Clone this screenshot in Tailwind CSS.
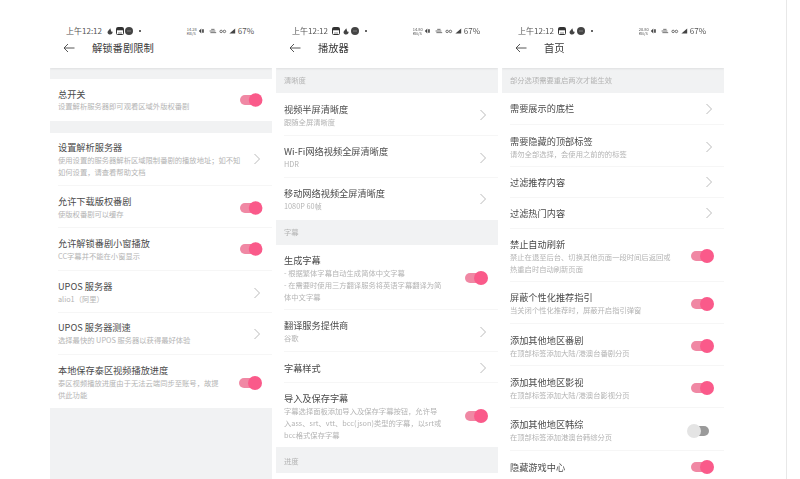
<!DOCTYPE html>
<html lang="zh">
<head>
<meta charset="utf-8">
<script src="https://cdn.jsdelivr.net/npm/@tailwindcss/browser@4"></script>
<title>设置</title>
</head>
<body class="bg-white overflow-hidden font-['Noto_Sans_CJK_SC','Noto_Sans',sans-serif]">
<svg class="hidden">
<symbol id="chev" viewBox="0 0 8 12"><path d="M1.5 1 L6.5 6 L1.5 11" fill="none" stroke="#a8a8a8" stroke-width="0.8"/></symbol>
<symbol id="back" viewBox="0 0 12 10"><path d="M11.5 5H1M5 1L1 5L5 9" fill="none" stroke="#444" stroke-width="0.9"/></symbol>
<symbol id="tog" viewBox="0 0 24 16"><rect x="0" y="3" width="20" height="10" rx="5" fill="#f088a4"/><circle cx="16" cy="8" r="7" fill="#fa5a8a"/></symbol>
<symbol id="togoff" viewBox="0 0 24 16"><rect x="5" y="3" width="18" height="10" rx="5" fill="#9a9a9a"/><circle cx="8" cy="8" r="7" fill="#e4e4e4"/></symbol>
<symbol id="img" viewBox="0 0 8 8"><rect x=".5" y=".5" width="7" height="7" rx="1" fill="none" stroke="#333"/><path d="M1 3H7V1H1ZM2 6H6" stroke="#333" fill="#333" stroke-width=".6"/></symbol>
<symbol id="fl" viewBox="0 0 8 8"><path d="M4 .5C5 2 2 3 1.5 5.200C1.500 7 3 7.500 4 7.500C6 7.500 7 6 6.500 4.500C5.500 5 5 4.500 5 3.500Z" fill="#444"/></symbol>
<symbol id="circ" viewBox="0 0 8 8"><circle cx="4" cy="4" r="4" fill="#444"/><path d="M2 4H6" stroke="#999" stroke-width=".7"/></symbol>
<symbol id="sig" viewBox="0 0 46 8"><path d="M1 4L4 1V7ZM5 2H7V6H5Z" fill="#444"/><path d="M14 4H21M15 6H22M16 2H20" stroke="#555" stroke-width="1"/><circle cx="28" cy="4.500" r="1.500" fill="none" stroke="#555"/><circle cx="32" cy="4.500" r="1.500" fill="none" stroke="#555"/><path d="M38 7L45 1V7Z" fill="#444"/></symbol>
</svg>
<div class="flex items-start pl-[50px] gap-1 h-[479px] overflow-hidden blur-[0.4px]">

<!-- panel 1 -->
<div class="w-[222px] h-[479px] bg-[#f1f2f3] shrink-0 overflow-hidden">
  <div class="h-[68px] bg-white shadow-[0_1px_2px_rgba(0,0,0,0.08)] relative">
    <div class="h-[44px] pt-[17px] pl-4 pr-[18px] flex items-center justify-between text-[8px] text-[#555]">
      <div class="flex items-center gap-[1.500px]"><span class="mr-[3px]">上午12:12</span><svg class="w-2 h-2"><use href="#fl"/></svg><svg class="w-2 h-2"><use href="#img"/></svg><svg class="w-2 h-2"><use href="#circ"/></svg><span class="ml-1 w-[2px] h-[2px] bg-[#333] rounded-full"></span></div>
      <div class="flex items-center gap-[2px]"><span class="text-[4px] leading-[4px] w-[9px] text-center">14.28 KB/S</span><svg class="w-[38px] h-2"><use href="#sig"/></svg><span>67%</span></div>
    </div>
    <div class="flex items-center h-[10px] pl-[13px] mt-[-1px] text-[10.300px] text-[#3a3a3a]"><svg class="w-[12px] h-[10px] mr-[17px]"><use href="#back"/></svg>解锁番剧限制</div>
  </div>
  <div class="mt-[11px] bg-white h-[42px] pl-2 pr-[9px] flex items-center justify-between">
    <div class="w-[186px]"><p class="text-[9.200px] leading-[12px] text-[#4a4a4a]">总开关</p><p class="text-[7.300px] leading-[12px] text-[#b4b4b4]">设置解析服务器即可观看区域外版权番剧</p></div>
    <svg class="w-6 h-4"><use href="#tog"/></svg>
  </div>
  <div class="mt-[12px] bg-white">
    <div class="h-[53px] ml-2 pr-[11px] flex items-center justify-between border-b border-[#f6f6f6]">
      <div class="w-[186px]"><p class="text-[9.200px] leading-[13px] text-[#4a4a4a]">设置解析服务器</p><p class="text-[7.300px] leading-[12px] text-[#b4b4b4]">使用设置的服务器解析区域限制番剧的播放地址；如不知<br>如何设置，请查看帮助文档</p></div>
      <svg class="w-2 h-3"><use href="#chev"/></svg>
    </div>
    <div class="h-[42px] pt-[2px] ml-2 pr-[9px] flex items-center justify-between border-b border-[#f6f6f6]">
      <div class="w-[186px]"><p class="text-[9.200px] leading-[13px] text-[#4a4a4a]">允许下载版权番剧</p><p class="text-[7.300px] leading-[12px] text-[#b4b4b4]">使版权番剧可以缓存</p></div>
      <svg class="w-6 h-4"><use href="#tog"/></svg>
    </div>
    <div class="h-[43px] ml-2 pr-[9px] flex items-center justify-between border-b border-[#f6f6f6]">
      <div class="w-[186px]"><p class="text-[9.200px] leading-[13px] text-[#4a4a4a]">允许解锁番剧小窗播放</p><p class="text-[7.300px] leading-[12px] text-[#b4b4b4]">CC字幕并不能在小窗显示</p></div>
      <svg class="w-6 h-4"><use href="#tog"/></svg>
    </div>
    <div class="h-[42px] pt-[2px] ml-2 pr-[11px] flex items-center justify-between border-b border-[#f6f6f6]">
      <div class="w-[186px]"><p class="text-[9.200px] leading-[13px] text-[#4a4a4a]">UPOS 服务器</p><p class="text-[7.300px] leading-[12px] text-[#b4b4b4]">alio1（阿里）</p></div>
      <svg class="w-2 h-3"><use href="#chev"/></svg>
    </div>
    <div class="h-[42px] ml-2 pr-[11px] flex items-center justify-between border-b border-[#f6f6f6]">
      <div class="w-[186px]"><p class="text-[9.200px] leading-[13px] text-[#4a4a4a]">UPOS 服务器测速</p><p class="text-[7.300px] leading-[12px] text-[#b4b4b4]">选择最快的 UPOS 服务器以获得最好体验</p></div>
      <svg class="w-2 h-3"><use href="#chev"/></svg>
    </div>
    <div class="h-[53px] pt-[2px] ml-2 pr-[9px] flex items-center justify-between">
      <div class="w-[170px]"><p class="text-[9.200px] leading-[13px] text-[#4a4a4a]">本地保存泰区视频播放进度</p><p class="text-[7.300px] leading-[12px] text-[#b4b4b4]">泰区视频播放进度由于无法云端同步至账号，故提<br>供此功能</p></div>
      <svg class="w-6 h-4"><use href="#tog"/></svg>
    </div>
  </div>
</div>

<!-- panel 2 -->
<div class="w-[222px] h-[473px] bg-white shrink-0 overflow-hidden">
  <div class="h-[68px] bg-white shadow-[0_1px_2px_rgba(0,0,0,0.08)] relative">
    <div class="h-[44px] pt-[17px] pl-4 pr-[18px] flex items-center justify-between text-[8px] text-[#555]">
      <div class="flex items-center gap-[1.500px]"><span class="mr-[3px]">上午12:12</span><svg class="w-2 h-2"><use href="#img"/></svg><svg class="w-2 h-2"><use href="#fl"/></svg><svg class="w-2 h-2"><use href="#circ"/></svg><span class="ml-1 w-[2px] h-[2px] bg-[#333] rounded-full"></span></div>
      <div class="flex items-center gap-[2px]"><span class="text-[4px] leading-[4px] w-[9px] text-center">14.80 KB/S</span><svg class="w-[38px] h-2"><use href="#sig"/></svg><span>67%</span></div>
    </div>
    <div class="flex items-center h-[10px] pl-[13px] mt-[-1px] text-[10.300px] text-[#3a3a3a]"><svg class="w-[12px] h-[10px] mr-[17px]"><use href="#back"/></svg>播放器</div>
  </div>
  <div class="h-[25px] bg-[#f1f2f3] pl-2 flex items-center text-[7.300px] text-[#b4b4b4]">清晰度</div>
  <div class="h-[43px] pt-[2px] ml-2 pr-[11px] flex items-center justify-between border-b border-[#f6f6f6]">
    <div><p class="text-[9.200px] leading-[13px] text-[#4a4a4a]">视频半屏清晰度</p><p class="text-[7.300px] leading-[12px] text-[#b4b4b4]">跟随全屏清晰度</p></div>
    <svg class="w-2 h-3"><use href="#chev"/></svg>
  </div>
  <div class="h-[42px] pt-[2px] ml-2 pr-[11px] flex items-center justify-between border-b border-[#f6f6f6]">
    <div><p class="text-[9.200px] leading-[13px] text-[#4a4a4a]">Wi-Fi网络视频全屏清晰度</p><p class="text-[7.300px] leading-[12px] text-[#b4b4b4]">HDR</p></div>
    <svg class="w-2 h-3"><use href="#chev"/></svg>
  </div>
  <div class="h-[42px] ml-2 pr-[11px] flex items-center justify-between">
    <div><p class="text-[9.200px] leading-[13px] text-[#4a4a4a]">移动网络视频全屏清晰度</p><p class="text-[7.300px] leading-[12px] text-[#b4b4b4]">1080P 60帧</p></div>
    <svg class="w-2 h-3"><use href="#chev"/></svg>
  </div>
  <div class="h-[25px] bg-[#f1f2f3] pl-2 flex items-center text-[7.300px] text-[#b4b4b4]">字幕</div>
  <div class="h-[65px] pt-[2px] ml-2 pr-[9px] flex items-center justify-between border-b border-[#f6f6f6]">
    <div><p class="text-[9.200px] leading-[13px] text-[#4a4a4a]">生成字幕</p><p class="text-[7.300px] leading-[12px] text-[#b4b4b4]">- 根据繁体字幕自动生成简体中文字幕<br>- 在需要时使用三方翻译服务将英语字幕翻译为简<br>体中文字幕</p></div>
    <svg class="w-6 h-4"><use href="#tog"/></svg>
  </div>
  <div class="h-[42px] pt-[2px] ml-2 pr-[11px] flex items-center justify-between border-b border-[#f6f6f6]">
    <div><p class="text-[9.200px] leading-[13px] text-[#4a4a4a]">翻译服务提供商</p><p class="text-[7.300px] leading-[12px] text-[#b4b4b4]">谷歌</p></div>
    <svg class="w-2 h-3"><use href="#chev"/></svg>
  </div>
  <div class="h-[31px] pt-[2px] ml-2 pr-[11px] flex items-center justify-between border-b border-[#f6f6f6]">
    <p class="text-[9.200px] leading-[13px] text-[#4a4a4a]">字幕样式</p>
    <svg class="w-2 h-3"><use href="#chev"/></svg>
  </div>
  <div class="h-[64px] pt-[2px] ml-2 pr-[9px] flex items-center justify-between">
    <div><p class="text-[9.200px] leading-[13px] text-[#4a4a4a]">导入及保存字幕</p><p class="text-[7.300px] leading-[12px] text-[#b4b4b4]">字幕选择面板添加导入及保存字幕按钮，允许导<br>入ass、srt、vtt、bcc(json)类型的字幕，以srt或<br>bcc格式保存字幕</p></div>
    <svg class="w-6 h-4"><use href="#tog"/></svg>
  </div>
  <div class="h-[26px] pt-[2px] bg-[#f1f2f3] pl-2 flex items-center text-[7.300px] text-[#b4b4b4]">进度</div>
</div>

<!-- panel 3 -->
<div class="w-[222px] h-[479px] bg-white shrink-0 overflow-hidden">
  <div class="h-[68px] bg-white shadow-[0_1px_2px_rgba(0,0,0,0.08)] relative">
    <div class="h-[44px] pt-[17px] pl-4 pr-[18px] flex items-center justify-between text-[8px] text-[#555]">
      <div class="flex items-center gap-[1.500px]"><span class="mr-[3px]">上午12:12</span><svg class="w-2 h-2"><use href="#img"/></svg><svg class="w-2 h-2"><use href="#fl"/></svg><svg class="w-2 h-2"><use href="#circ"/></svg><span class="ml-1 w-[2px] h-[2px] bg-[#333] rounded-full"></span></div>
      <div class="flex items-center gap-[2px]"><span class="text-[4px] leading-[4px] w-[9px] text-center">20.80 KB/S</span><svg class="w-[38px] h-2"><use href="#sig"/></svg><span>67%</span></div>
    </div>
    <div class="flex items-center h-[10px] pl-[13px] mt-[-1px] text-[10.300px] text-[#3a3a3a]"><svg class="w-[12px] h-[10px] mr-[17px]"><use href="#back"/></svg>首页</div>
  </div>
  <div class="h-[25px] bg-[#f1f2f3] pl-2 flex items-center text-[7.300px] text-[#b4b4b4]">部分选项需要重启两次才能生效</div>
  <div class="h-[32px] ml-2 pr-[11px] flex items-center justify-between border-b border-[#f6f6f6]">
    <p class="text-[9.200px] leading-[13px] text-[#4a4a4a]">需要展示的底栏</p>
    <svg class="w-2 h-3"><use href="#chev"/></svg>
  </div>
  <div class="h-[42px] pt-[3px] ml-2 pr-[11px] flex items-center justify-between border-b border-[#f6f6f6]">
    <div><p class="text-[9.200px] leading-[13px] text-[#4a4a4a]">需要隐藏的顶部标签</p><p class="text-[7.300px] leading-[12px] text-[#b4b4b4]">请勿全部选择，会使用之前的的标签</p></div>
    <svg class="w-2 h-3"><use href="#chev"/></svg>
  </div>
  <div class="h-[31px] ml-2 pr-[11px] flex items-center justify-between border-b border-[#f6f6f6]">
    <p class="text-[9.200px] leading-[13px] text-[#4a4a4a]">过滤推荐内容</p>
    <svg class="w-2 h-3"><use href="#chev"/></svg>
  </div>
  <div class="h-[31px] ml-2 pr-[11px] flex items-center justify-between border-b border-[#f6f6f6]">
    <p class="text-[9.200px] leading-[13px] text-[#4a4a4a]">过滤热门内容</p>
    <svg class="w-2 h-3"><use href="#chev"/></svg>
  </div>
  <div class="h-[53px] pt-[2px] ml-2 pr-[9px] flex items-center justify-between border-b border-[#f6f6f6]">
    <div><p class="text-[9.200px] leading-[13px] text-[#4a4a4a]">禁止自动刷新</p><p class="text-[7.300px] leading-[12px] text-[#b4b4b4]">禁止在退至后台、切换其他页面一段时间后返回或<br>热重启时自动刷新页面</p></div>
    <svg class="w-6 h-4"><use href="#tog"/></svg>
  </div>
  <div class="h-[42px] pt-[2px] ml-2 pr-[9px] flex items-center justify-between border-b border-[#f6f6f6]">
    <div><p class="text-[9.200px] leading-[13px] text-[#4a4a4a]">屏蔽个性化推荐指引</p><p class="text-[7.300px] leading-[12px] text-[#b4b4b4]">当关闭个性化推荐时，屏蔽开启指引弹窗</p></div>
    <svg class="w-6 h-4"><use href="#tog"/></svg>
  </div>
  <div class="h-[42px] pt-[3px] ml-2 pr-[9px] flex items-center justify-between border-b border-[#f6f6f6]">
    <div><p class="text-[9.200px] leading-[13px] text-[#4a4a4a]">添加其他地区番剧</p><p class="text-[7.300px] leading-[12px] text-[#b4b4b4]">在顶部标签添加大陆/港澳台番剧分页</p></div>
    <svg class="w-6 h-4"><use href="#tog"/></svg>
  </div>
  <div class="h-[42px] pt-[3px] ml-2 pr-[9px] flex items-center justify-between border-b border-[#f6f6f6]">
    <div><p class="text-[9.200px] leading-[13px] text-[#4a4a4a]">添加其他地区影视</p><p class="text-[7.300px] leading-[12px] text-[#b4b4b4]">在顶部标签添加大陆/港澳台影视分页</p></div>
    <svg class="w-6 h-4"><use href="#tog"/></svg>
  </div>
  <div class="h-[43px] pt-[3px] ml-2 pr-[14px] flex items-center justify-between border-b border-[#f6f6f6]">
    <div><p class="text-[9.200px] leading-[13px] text-[#4a4a4a]">添加其他地区韩综</p><p class="text-[7.300px] leading-[12px] text-[#b4b4b4]">在顶部标签添加港澳台韩综分页</p></div>
    <svg class="w-6 h-4"><use href="#togoff"/></svg>
  </div>
  <div class="h-[30px] pt-[2px] ml-2 pr-[9px] flex items-center justify-between">
    <p class="text-[9.200px] leading-[13px] text-[#4a4a4a]">隐藏游戏中心</p>
    <svg class="w-6 h-4"><use href="#tog"/></svg>
  </div>
</div>

<div class="w-px h-[479px] ml-[58px] shrink-0 bg-[#e8e8e8]"></div>
</div>
</body>
</html>
